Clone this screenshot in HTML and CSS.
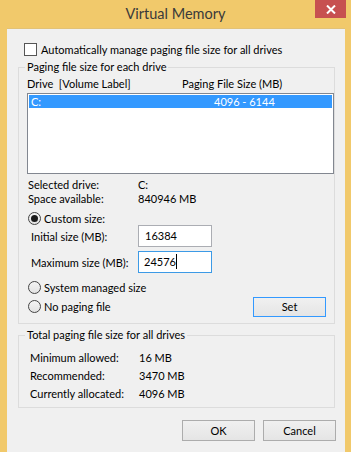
FILE: index.html
```html
<!DOCTYPE html>
<html lang="en">
<head>
    <meta charset="UTF-8">
    <title>Virtual Memory</title>
    <link rel="stylesheet" href="styles.css">
</head>
<body>
    <div class="window">
        <div class="titlebar">
            <span></span>
            <span class="title">Virtual Memory</span>
            <button class="close" title="Close">
                <svg width="10" height="9" viewBox="0 0 10 9">
                    <path d="M1 0.5 L9 8.5 M9 0.5 L1 8.5" stroke="#fff" stroke-width="2"/>
                </svg>
            </button>
        </div>

        <div class="client">
            <div class="check-row">
                <span class="checkbox"></span>
                <span>Automatically manage paging file size for all drives</span>
            </div>

            <!-- Per drive settings -->
            <fieldset class="group group-drive">
                <legend>Paging file size for each drive</legend>
                <div class="list-head">
                    <span class="col-drive">Drive&nbsp;&nbsp;[Volume Label]</span>
                    <span class="col-size">Paging File Size (MB)</span>
                </div>
                <div class="listbox">
                    <div class="list-item selected">
                        <span class="item-drive">C:</span>
                        <span class="item-size">4096 - 6144</span>
                    </div>
                </div>

                <div class="info">
                    <span>Selected drive:</span><span>C:</span>
                    <span>Space available:</span><span>840946 MB</span>
                </div>

                <div class="radio-row first">
                    <span class="radio checked"></span>
                    <span>Custom size:</span>
                </div>
                <div class="field-row">
                    <label>Initial size (MB):</label>
                    <div class="input">16384</div>
                </div>
                <div class="field-row second">
                    <label>Maximum size (MB):</label>
                    <div class="input focused">24576<span class="caret"></span></div>
                </div>
                <div class="radio-row system">
                    <span class="radio"></span>
                    <span>System managed size</span>
                </div>
                <div class="radio-row last">
                    <span class="radio"></span>
                    <span class="grow">No paging file</span>
                    <button class="btn default">Set</button>
                </div>
            </fieldset>

            <!-- Totals -->
            <fieldset class="group group-total">
                <legend>Total paging file size for all drives</legend>
                <div class="totals">
                    <span>Minimum allowed:</span><span>16 MB</span>
                    <span>Recommended:</span><span>3470 MB</span>
                    <span>Currently allocated:</span><span>4096 MB</span>
                </div>
            </fieldset>

            <div class="dialog-buttons">
                <button class="btn">OK</button>
                <button class="btn">Cancel</button>
            </div>
        </div>
    </div>
</body>
</html>
```

FILE: styles.css
```css
body {
    margin: 0;
    padding: 0;
    font-family: "Lato", "Noto Sans", sans-serif;
    font-size: 11px;
    color: #000;
    background-color: #f1c96b;
    white-space: nowrap;
}

.window {
    width: 351px;
    height: 452px;
    overflow: hidden;
}

/* Title bar */
.titlebar {
    height: 28px;
    display: grid;
    grid-template-columns: 1fr auto 1fr;
    align-items: start;
}

.title {
    font-size: 14.5px;
    line-height: 27px;
    color: #3a3a3a;
}

.close {
    justify-self: end;
    width: 31px;
    height: 18px;
    margin-right: 5px;
    padding: 0;
    border: none;
    background: #c75050;
    display: flex;
    align-items: center;
    justify-content: center;
}

/* Client area */
.client {
    margin: 0 6px 0 7px;
    height: 424px;
    background: #f0f0f0;
    border-top: 1px solid #e2c277;
    box-sizing: border-box;
    padding-top: 12px;
}

.check-row {
    display: flex;
    align-items: center;
    height: 16px;
    margin-left: 17px;
    gap: 4px;
}

.checkbox {
    width: 11px;
    height: 11px;
    border: 1px solid #555;
    background: #fff;
}

/* Group boxes */
.group {
    margin: 3px 10px 0 11px;
    padding: 3px 0 6px 8px;
    border: 1px solid #dcdcdc;
    min-width: 0;
}

.group legend {
    padding: 0 2px;
    margin-left: -2px;
    line-height: 14px;
}

.group-total {
    margin-top: 4px;
    padding: 7px 0 4px 8px;
}

.list-head {
    display: flex;
    line-height: 14px;
}

.col-drive {
    width: 155px;
}

.listbox {
    margin-top: 2px;
    height: 81px;
    border: 1px solid #828790;
    background: #fff;
    box-sizing: border-box;
    padding: 1px;
}

.list-item {
    display: flex;
    height: 13px;
    line-height: 13px;
}

.list-item.selected {
    background: #3399ff;
    color: #fff;
}

.item-drive {
    width: 183px;
    padding-left: 2px;
}

.info, .totals {
    display: grid;
    grid-template-columns: 110px auto;
    line-height: 14px;
    margin-top: 4px;
    margin-left: 1px;
}

.totals {
    grid-template-columns: 109px auto;
    line-height: 18px;
    margin-top: 0;
    margin-left: 3px;
}

.radio-row {
    display: flex;
    align-items: center;
    height: 14px;
    margin-left: 1px;
    gap: 3px;
}

.radio-row.first {
    margin-top: 5px;
}

.radio-row.system {
    margin-top: 7px;
}

.radio-row.last {
    height: 21px;
    margin-top: 2px;
}

.grow {
    flex: 1;
}

.radio {
    width: 11px;
    height: 11px;
    border: 1px solid #444;
    border-radius: 50%;
    background: linear-gradient(#f4f4f4, #e2e2e2);
    position: relative;
}

.radio.checked::after {
    content: "";
    position: absolute;
    left: 2px;
    top: 2px;
    width: 7px;
    height: 7px;
    border-radius: 50%;
    background: #1a1a1a;
}

.field-row {
    display: grid;
    grid-template-columns: 107px 74px;
    align-items: center;
    height: 22px;
    padding-left: 4px;
}

.field-row.second {
    margin-top: 4px;
}

.input {
    height: 22px;
    box-sizing: border-box;
    border: 1px solid #abadb3;
    background: #fff;
    padding-left: 6px;
    line-height: 20px;
}

.input.focused {
    border-color: #3c9ae6;
    padding-left: 5px;
}

.caret {
    display: inline-block;
    width: 1px;
    height: 15px;
    background: #000;
    vertical-align: -3px;
}

/* Buttons */
.btn {
    width: 73px;
    height: 21px;
    padding: 0;
    font-family: inherit;
    font-size: 11px;
    color: #000;
    border: 1px solid #acacac;
    background: linear-gradient(#f0f0f0, #e5e5e5);
}

.btn.default {
    margin-right: 8px;
    height: 20px;
    border-color: #3399ff;
}

.dialog-buttons {
    display: flex;
    justify-content: flex-end;
    gap: 8px;
    margin-top: 12px;
    margin-right: 9px;
}
```
